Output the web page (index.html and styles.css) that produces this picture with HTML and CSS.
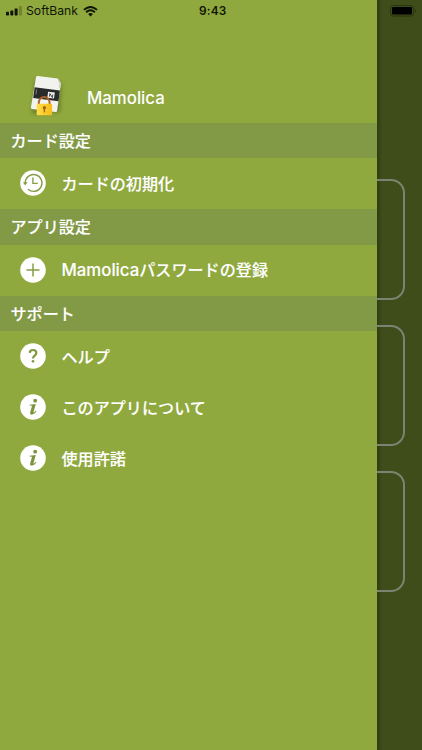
FILE: index.html
```
<!DOCTYPE html>
<html lang="ja">
<head>
<meta charset="utf-8">
<meta name="viewport" content="width=device-width, initial-scale=1">
<title>Mamolica</title>
<link rel="stylesheet" href="styles.css">
</head>
<body>
<div class="screen">
  <div class="drawer">
    <header class="status">
      <svg class="signal" width="17" height="10" viewBox="0 0 17 10"><rect x="0" y="5.8" width="3" height="3.7" rx=".7"/><rect x="4.3" y="4.4" width="3" height="5.1" rx=".7"/><rect x="8.6" y="2.4" width="3" height="7.1" rx=".7"/><rect x="12.9" y="0" width="3" height="9.5" rx=".7" opacity=".25"/></svg>
      <span class="carrier">SoftBank</span>
      <svg class="wifi" width="15" height="11" viewBox="0 0 15 11"><path d="M.9 3.9Q7.5-2 14.1 3.9M3.1 6.2q4.4-3.7 8.8 0" fill="none" stroke="#101505" stroke-width="1.9"/><path d="M5.1 8.1q2.4-2 4.8 0L7.5 10.6z"/></svg>
      <span class="time">9:43</span>
    </header>
    <div class="brand">
      <svg class="logo" width="48" height="48" viewBox="0 0 48 48">
        <defs>
          <filter id="shadow" x="-40%" y="-40%" width="180%" height="180%"><feGaussianBlur stdDeviation="2.2"/></filter>
          <linearGradient id="gold" x2="1" y2="0"><stop offset="0" stop-color="#ffdf45"/><stop offset="1" stop-color="#f6bd18"/></linearGradient>
        </defs>
        <path d="M13 7 39 10 38 39 10 41z" fill="#46591c" opacity=".55" filter="url(#shadow)"/>
        <path d="M14 4.2q.2-1.5 1.7-1.3L35.7 5.6l3.2 4.7-3.8 27.4q-.2 1.4-1.6 1.2L10.2 36q-1.5-.2-1.3-1.6z" fill="#f2f3ef"/>
        <path d="M35.7 5.6l3.2 4.7-.5 4.7-1.5-.2.4-3.5z" fill="#cfd2ca"/>
        <path d="M12.6 14.2 37.9 17.5 36.5 28.2 11.2 24.9z" fill="#292b2a"/>
        <path d="M26.1 18.7 32.8 19.6 32 25.6 25.3 24.7z" fill="#f0f1ef"/>
        <path d="m27.4 23.7.5-3.2 2.4 4 .5-3" fill="none" stroke="#343634" stroke-width=".9"/>
        <path d="m14.6 16.4-.6 5" stroke="#929692" stroke-width=".8"/>
        <path d="M16.8 32v-2.6a5.4 5.4 0 0 1 10.8 0V32" fill="none" stroke="#a9652c" stroke-width="2"/>
        <rect x="14.7" y="30.8" width="15.4" height="11.4" rx="1.2" fill="url(#gold)"/>
        <circle cx="22.4" cy="34.7" r="1.7" fill="#a4661e"/><path d="M21.7 34.4h1.4v5h-1.4z" fill="#a4661e"/>
      </svg>
      <span class="name">Mamolica</span>
    </div>
    <h2 class="section">カード設定</h2>
    <div class="item">
      <svg class="icon" viewBox="0 0 26 26"><circle cx="13" cy="13" r="12.8" fill="#fff"/><path d="M5.2 13.1A8.4 8.4 0 1 1 8 19.2M12.9 7.6v5.8h4.9" fill="none" stroke="#879f49" stroke-width="1.4"/><path d="M2.9 12.3h4.7l-2.4 3.1z" fill="#879f49"/></svg>
      <span>カードの初期化</span>
    </div>
    <h2 class="section">アプリ設定</h2>
    <div class="item">
      <svg class="icon" viewBox="0 0 26 26"><circle cx="13" cy="13" r="12.8" fill="#fff"/><path d="M6.5 13h13M13 6.5v13" stroke="#849d45" stroke-width="1.5"/></svg>
      <span><span class="latin">Mamolica</span>パスワードの登録</span>
    </div>
    <h2 class="section">サポート</h2>
    <div class="item">
      <svg class="icon" viewBox="0 0 26 26"><circle cx="13" cy="13" r="12.8" fill="#fff"/><path d="M9.7 9.9C9.8 6 16.3 6 16.3 10c0 2.6-3.3 2.6-3.3 5.4" fill="none" stroke="#82993f" stroke-width="2.2"/><circle cx="13" cy="18.3" r="1.35" fill="#82993f"/></svg>
      <span>ヘルプ</span>
    </div>
    <div class="item">
      <svg class="icon" viewBox="0 0 26 26"><circle cx="13" cy="13" r="12.8" fill="#fff"/><circle cx="15.2" cy="6.7" r="1.9" fill="#7c943d"/><path d="M9.6 10.8 15.8 10l-2.3 8.1c-.2.8.5.6 2.3-1.4l.6.5c-1.5 2.3-3 3.3-4.6 3.3-1.5 0-2-.9-1.6-2.3l1.7-5.9c.2-.7-.2-.8-2.4-.8z" fill="#7c943d"/></svg>
      <span>このアプリについて</span>
    </div>
    <div class="item">
      <svg class="icon" viewBox="0 0 26 26"><circle cx="13" cy="13" r="12.8" fill="#fff"/><circle cx="15.2" cy="6.7" r="1.9" fill="#7c943d"/><path d="M9.6 10.8 15.8 10l-2.3 8.1c-.2.8.5.6 2.3-1.4l.6.5c-1.5 2.3-3 3.3-4.6 3.3-1.5 0-2-.9-1.6-2.3l1.7-5.9c.2-.7-.2-.8-2.4-.8z" fill="#7c943d"/></svg>
      <span>使用許諾</span>
    </div>
  </div>
  <div class="behind">
    <svg class="battery" width="27" height="12" viewBox="0 0 27 12"><rect x=".5" y=".5" width="23" height="10.5" rx="2.3" fill="none" stroke="#29330f"/><rect x="2" y="2" width="20" height="7.5" rx="1" fill="#000"/><path d="M25 4v3.6q2-1.8 0-3.6" fill="#29330f"/></svg>
    <div class="cards"><div class="card"></div><div class="card"></div><div class="card"></div></div>
  </div>
</div>
</body>
</html>
```
FILE: styles.css
```
* { box-sizing: border-box; }
body { margin: 0; font-family: Inter, "Noto Sans CJK JP", sans-serif; }
.screen { display: grid; grid-template-columns: 377px 45px; width: 422px; height: 750px; overflow: hidden; }
.drawer { background: #90a93f; color: #fff; }
.status { display: flex; align-items: center; height: 22px; padding-left: 6px; color: #101505; font-size: 12px; line-height: 22px; }
.status svg { flex: none; fill: #101505; }
.carrier { width: 53px; margin-left: 3px; font-size: 12.2px; white-space: nowrap; }
.wifi { margin-left: 4px; }
.time { margin-left: 101px; font-size: 11.8px; font-weight: 600; letter-spacing: .2px; }
.brand { display: flex; align-items: center; height: 100.5px; padding: 50px 0 0 22px; }
.logo { flex: none; }
.name { margin: 2px 0 0 17px; font-size: 16.8px; font-weight: 500; line-height: 24px; }
.section { height: 35.5px; margin: 0; padding: 0 0 0 10.5px; background: #829946; font-size: 16.1px; font-weight: 500; line-height: 36.2px; -webkit-text-stroke: .12px #fff; }
.item { display: flex; align-items: center; height: 51px; padding-left: 20px; font-size: 16.1px; font-weight: 500; line-height: 24px; -webkit-text-stroke: .12px #fff; }
.icon { flex: none; width: 26px; height: 26px; margin: -1px 15.5px 0 0; }
.latin { font-size: 16.8px; }
.behind { display: flex; flex-direction: column; overflow: hidden; background: linear-gradient(90deg, #303c12 0, #3e4d19 5px); }
.battery { flex: none; margin: 5px 0 0 13px; }
.cards { display: flex; flex-direction: column; gap: 24.5px; margin-top: 161.5px; }
.card { width: 60px; height: 121.5px; margin-left: -32px; border: 2px solid #7d8372; border-radius: 14px; }
```
